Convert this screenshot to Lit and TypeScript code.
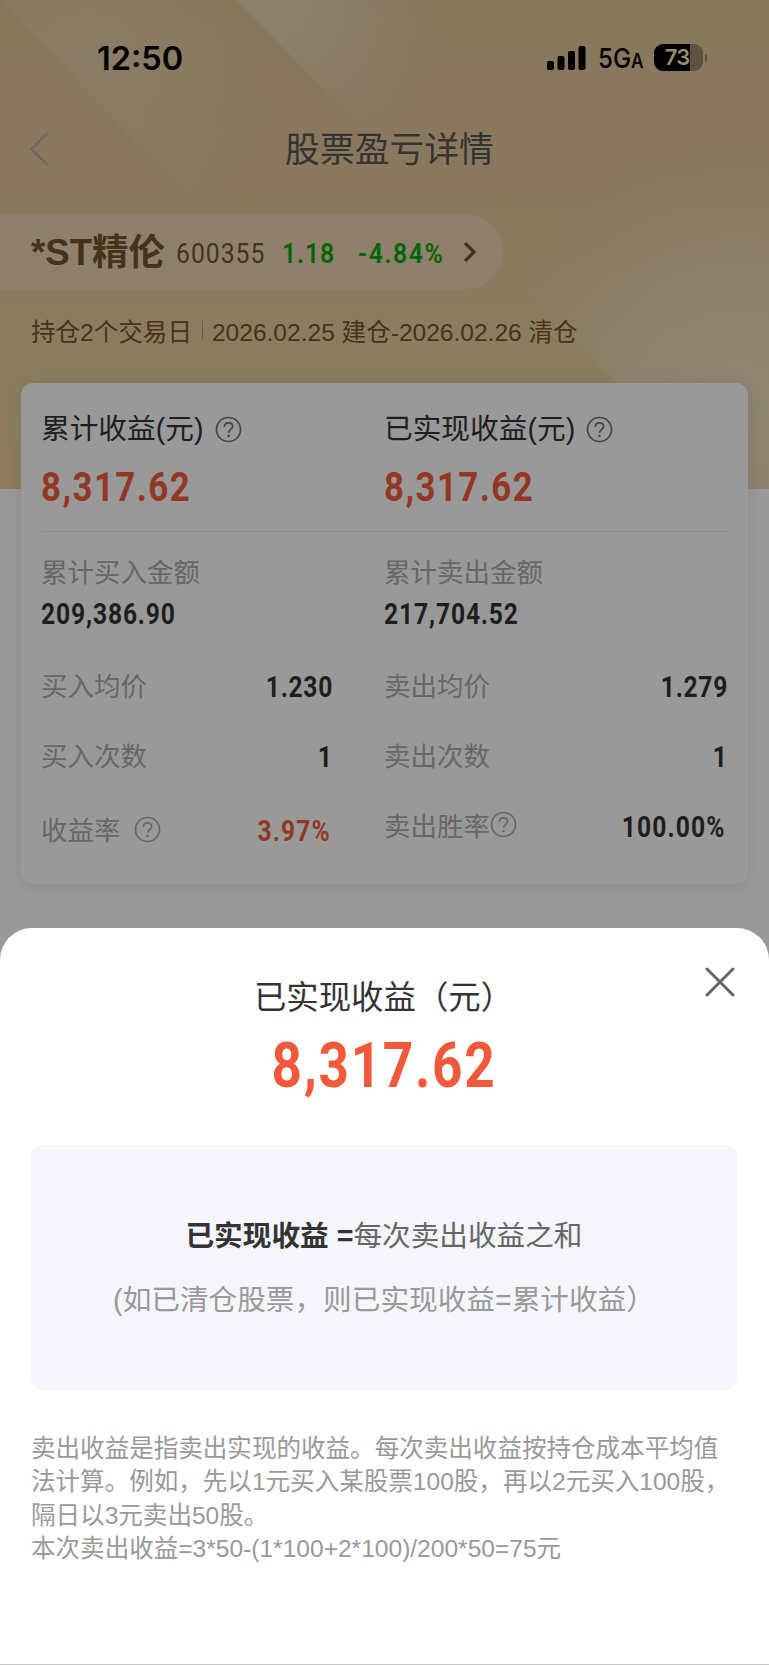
import { LitElement, html, css } from "lit";
import { customElement } from "lit/decorators.js";

@customElement("help-icon")
class HelpIcon extends LitElement {
  static styles = css`
    :host { display: block; width: 27px; height: 27px; }
    svg { display: block; }
  `;
  render() {
    return html`<svg width="27" height="27" viewBox="0 0 27 27" fill="none" stroke="currentColor">
      <circle cx="13.5" cy="13.5" r="12" stroke-width="1.7" />
      <path d="M9.400 10.900c0-2.500 1.700-4.100 4.100-4.100s4.100 1.500 4.100 3.600c0 2.900-4 3.300-4 6.400" stroke-width="1.7" />
      <circle cx="13.5" cy="19.900" r="1.200" fill="currentColor" stroke="none" />
    </svg>`;
  }
}

@customElement("status-bar")
class StatusBar extends LitElement {
  static styles = css`
    :host { display: flex; align-items: center; height: 114px; padding: 1px 62px 0 97px; box-sizing: border-box; color: #000; font-family: Inter, sans-serif; }
    .time { font-size: 32.5px; font-weight: 600; flex: 1; padding-top: 1px; }
    .net { display: flex; align-items: baseline; font-size: 27.5px; font-weight: 500; width: 56px; margin-left: 12px; padding-top: 3px; line-height: 30px; }
    .net span { display: flex; align-items: baseline; transform: scaleX(0.88); transform-origin: left; }
    .net small { font-size: 19.5px; font-weight: 600; }
    .battery { display: flex; align-items: center; }
    .cell { width: 49px; height: 27px; box-sizing: border-box; padding-right: 3px; border-radius: 9px; background: linear-gradient(90deg, #000 36px, #5e5340 36px); color: #9a8a6e; font-size: 22px; line-height: 27px; font-weight: 600; text-align: center; letter-spacing: -0.8px; }
    .nub { width: 2.5px; height: 8px; margin-left: 1.5px; border-radius: 0 3px 3px 0; background: #5e5340; }
  `;
  render() {
    return html`
      <div class="time">12:50</div>
      <svg width="39" height="26" viewBox="0 0 39 26">
        <rect x="0" y="16" width="7" height="9" rx="2" /><rect x="10.5" y="11" width="7" height="14" rx="2" />
        <rect x="21" y="6" width="7" height="19" rx="2" /><rect x="31.5" y="1" width="7" height="24" rx="2" />
      </svg>
      <div class="net"><span>5G<small>A</small></span></div>
      <div class="battery"><div class="cell">73</div><div class="nub"></div></div>`;
  }
}

@customElement("profit-card")
class ProfitCard extends LitElement {
  static styles = css`
    :host { display: block; box-sizing: border-box; width: 727px; height: 501px; margin-left: 21px; padding: 0 20px; border-radius: 12px; background: #999; box-shadow: 0 4px 20px rgba(0, 0, 0, 0.09); color: #1e1e1e; }
    .cols { display: grid; grid-template-columns: 343px 1fr; }
    .top { height: 149px; border-bottom: 1px solid #8e8e8e; box-sizing: border-box; }
    .label { display: flex; align-items: center; height: 44px; margin-top: 21px; font-size: 28.7px; gap: 11px; }
    .label help-icon { margin-top: 7px; color: #444; }
    .num { font-family: Roboto, sans-serif; font-weight: 700; transform: scaleX(0.85); transform-origin: left; }
    .big { font-size: 41px; line-height: 48px; margin-top: 15px; color: #943624; letter-spacing: 1.7px; }
    .sub { font-size: 26.5px; line-height: 40px; color: #666; white-space: nowrap; }
    .sums { padding-top: 21px; }
    .amount { font-size: 29px; line-height: 36px; margin-top: 3px; letter-spacing: 1px; }
    .row { display: flex; align-items: center; justify-content: space-between; height: 70px; color: #666; font-size: 26.5px; white-space: nowrap; }
    .row .num { font-size: 29px; letter-spacing: 0.8px; color: #1e1e1e; padding-top: 5px; transform-origin: right; }
    .row .name { display: flex; align-items: center; }
    .left { width: 292px; }
    .rows { padding-top: 17px; }
    .last { padding-top: 5px; }
    .last .name { margin-top: -2px; }
    .last help-icon { margin-top: 2px; }
    .name.gap { gap: 13px; }
    .row .num.red { color: #943624; padding-top: 3px; }
    .row .num.inset { padding-right: 1px; }
    .row .num.pct { padding-right: 3px; letter-spacing: 1.3px; }
  `;
  render() {
    const q = html`<help-icon></help-icon>`;
    return html`
      <div class="cols top">
        <div><div class="label">累计收益(元)${q}</div><div class="num big">8,317.62</div></div>
        <div><div class="label">已实现收益(元)${q}</div><div class="num big">8,317.62</div></div>
      </div>
      <div class="cols sums">
        <div><div class="sub">累计买入金额</div><div class="num amount">209,386.90</div></div>
        <div><div class="sub">累计卖出金额</div><div class="num amount">217,704.52</div></div>
      </div>
      <div class="cols rows">
        <div class="left">
          <div class="row"><span>买入均价</span><span class="num">1.230</span></div>
          <div class="row"><span>买入次数</span><span class="num inset">1</span></div>
          <div class="row last"><span class="name gap">收益率${q}</span><span class="num red pct">3.97%</span></div>
        </div>
        <div>
          <div class="row"><span>卖出均价</span><span class="num">1.279</span></div>
          <div class="row"><span>卖出次数</span><span class="num inset">1</span></div>
          <div class="row"><span class="name">卖出胜率${q}</span><span class="num pct">100.00%</span></div>
        </div>
      </div>`;
  }
}

@customElement("detail-sheet")
class DetailSheet extends LitElement {
  static styles = css`
    :host { display: block; box-sizing: border-box; position: relative; height: 737px; padding: 45px 32px 0 31px; border-radius: 32px 32px 0 0; background: #fff; border-bottom: 1px solid #c8c8c8; color: #333; }
    .close { position: absolute; top: 39px; right: 34px; }
    .title { text-align: center; font-size: 32.4px; line-height: 50px; padding-right: 1px; }
    .value { text-align: center; font-family: Roboto, sans-serif; font-weight: 700; font-size: 62.5px; line-height: 72px; margin-top: 7px; color: #f1593a; letter-spacing: 2px; transform: scaleX(0.85); }
    .box { height: 245.5px; margin-top: 42.5px; box-sizing: border-box; padding-top: 59px; border-radius: 12px; background: #f5f5fb; text-align: center; font-size: 28.65px; line-height: 64px; color: #666; white-space: nowrap; }
    .box b { color: #333; }
    .hint { color: #999; }
    .note { margin: 42px 0 0; font-size: 24.55px; line-height: 33.3px; color: #999; white-space: nowrap; }
  `;
  render() {
    return html`
      <svg class="close" width="30" height="30" viewBox="0 0 30 30" stroke="#666" stroke-width="3" stroke-linecap="round"><path d="M2 2l26 26M28 2l-26 26" /></svg>
      <div class="title">已实现收益（元）</div>
      <div class="value">8,317.62</div>
      <div class="box">
        <div><b>已实现收益 =</b>每次卖出收益之和</div>
        <div class="hint">(如已清仓股票，则已实现收益=累计收益）</div>
      </div>
      <p class="note">卖出收益是指卖出实现的收益。每次卖出收益按持仓成本平均值<br />法计算。例如，先以1元买入某股票100股，再以2元买入100股，<br />隔日以3元卖出50股。<br />本次卖出收益=3*50-(1*100+2*100)/200*50=75元</p>`;
  }
}

@customElement("app-root")
class AppRoot extends LitElement {
  static styles = css`
    :host { display: block; position: relative; width: 769px; height: 1665px; overflow: hidden; background: #999; font-family: "Liberation Sans", "Noto Sans CJK SC", sans-serif; }
    .art { position: absolute; left: 0; top: 0; }
    .page { position: relative; }
    .nav { display: grid; grid-template-columns: 60px 1fr 60px; align-items: center; height: 70px; color: #333; }
    .nav svg { margin-left: 29px; }
    .nav h1 { margin: -5px 0 0; font-size: 34.8px; font-weight: 400; text-align: center; padding-left: 10px; }
    .stock { display: flex; align-items: center; box-sizing: border-box; width: 503px; height: 75px; margin-top: 30px; padding-left: 31px; border-radius: 0 38px 38px 0; background: #8e806d; color: #463218; white-space: nowrap; }
    .stock b { font-size: 36.6px; width: 145px; margin-top: -5px; }
    .num { font-family: Roboto, sans-serif; font-size: 28.5px; letter-spacing: 1.1px; padding-top: 3px; transform: scaleX(0.87); transform-origin: left; }
    .code { width: 106px; }
    .up { width: 76px; color: #006400; font-weight: 600; letter-spacing: 1px; }
    .chg { width: 105px; color: #006400; font-weight: 600; letter-spacing: 1.8px; }
    .period { display: flex; align-items: center; height: 40px; margin: 21px 0 0 31px; font-size: 24.55px; color: #463218; white-space: nowrap; }
    .bar { width: 1px; height: 19px; margin: 0 9px 0 10px; background: #6f5f45; }
    profit-card { margin-top: 33px; }
    detail-sheet { margin-top: 44px; }
  `;
  render() {
    return html`
      <svg class="art" width="769" height="489" viewBox="0 0 769 489">
        <defs>
          <linearGradient id="bg" x1="0" y1="0" x2="0" y2="1">
            <stop offset="0" stop-color="#88785a" /><stop offset=".2" stop-color="#8a785e" /><stop offset=".4" stop-color="#8a795d" /><stop offset=".7" stop-color="#8c7d60" /><stop offset="1" stop-color="#8f7c5e" />
          </linearGradient>
          <radialGradient id="ray" gradientUnits="userSpaceOnUse" cx="90" cy="60" r="180">
            <stop offset="0" stop-color="#8b7e66" stop-opacity=".9" /><stop offset="1" stop-color="#8b7e66" stop-opacity="0" />
          </radialGradient>
          <radialGradient id="ray2" gradientUnits="userSpaceOnUse" cx="275" cy="0" r="170">
            <stop offset="0" stop-color="#8d8170" /><stop offset="1" stop-color="#8d8170" stop-opacity="0" />
          </radialGradient>
          <radialGradient id="glow" gradientUnits="userSpaceOnUse" cx="740" cy="400" r="250">
            <stop offset="0" stop-color="#8f8572" /><stop offset=".5" stop-color="#8e8270" stop-opacity=".8" /><stop offset="1" stop-color="#8c7d62" stop-opacity="0" />
          </radialGradient>
        </defs>
        <rect width="769" height="489" fill="url(#bg)" />
        <path d="M0 0L230 240L400 0Z" fill="url(#ray)" />
        <path d="M236 0L420 186L500 0Z" fill="url(#ray2)" />
        <path d="M769 130L480 130L480 240L617 383L718 489L769 489Z" fill="url(#glow)" />
      </svg>
      <div class="page">
        <status-bar></status-bar>
        <div class="nav">
          <svg width="20" height="36" viewBox="0 0 20 36" fill="none" stroke="#6c6a68" stroke-width="2.400"><path d="M18.500 2L2.500 18L18.500 34" /></svg>
          <h1>股票盈亏详情</h1>
        </div>
        <div class="stock">
          <b>*ST精伦</b><span class="num code">600355</span><span class="num up">1.18</span><span class="num chg">-4.84%</span>
          <svg width="14" height="22" viewBox="0 0 14 22" fill="none" stroke="#463218" stroke-width="3.200"><path d="M2 2L11 11L2 20" /></svg>
        </div>
        <div class="period">持仓2个交易日<span class="bar"></span>2026.02.25 建仓-2026.02.26 清仓</div>
        <profit-card></profit-card>
        <detail-sheet></detail-sheet>
      </div>`;
  }
}
